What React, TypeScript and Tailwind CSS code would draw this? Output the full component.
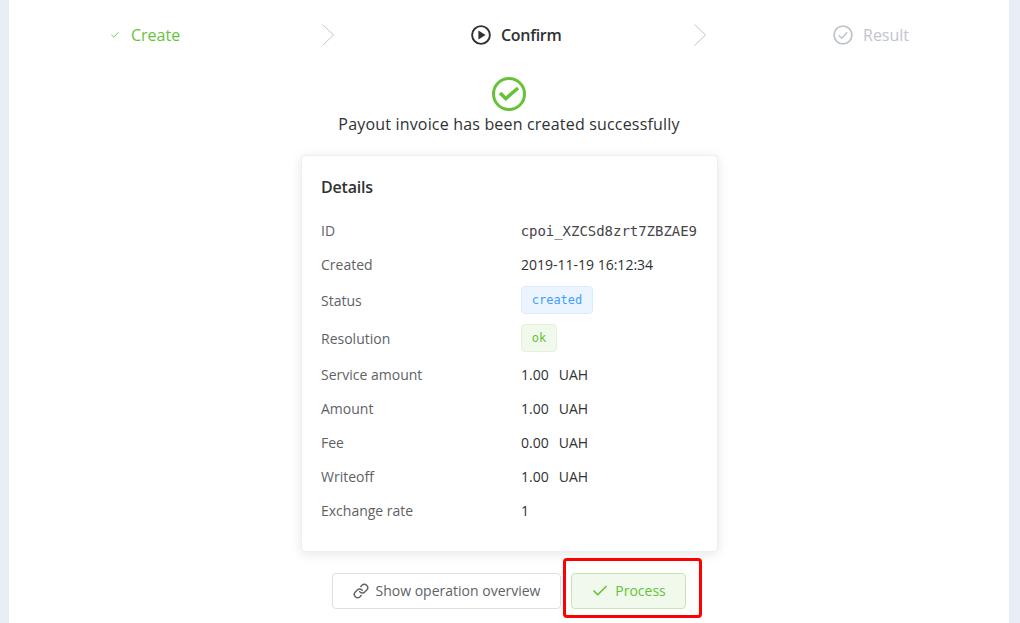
import { Check, Link as LinkIcon } from 'lucide-react';

const rows = [
  { label: 'Service amount', value: '1.00', unit: 'UAH' },
  { label: 'Amount', value: '1.00', unit: 'UAH' },
  { label: 'Fee', value: '0.00', unit: 'UAH' },
  { label: 'Writeoff', value: '1.00', unit: 'UAH' },
  { label: 'Exchange rate', value: '1', unit: '' },
];

function Row({ label, children, h = 'h-[34px]' }: { label: string; children: React.ReactNode; h?: string }) {
  return (
    <div className={`flex items-center ${h}`}>
      <div className="w-[200px] text-[#606266]">{label}</div>
      <div className="text-[#303133]">{children}</div>
    </div>
  );
}

function Arrow() {
  return (
    <svg width="12" height="22" viewBox="0 0 12 22" fill="none" stroke="#c0c4cc" strokeWidth="1">
      <path d="M0.5 0.5 L11.5 11 L0.5 21.5" />
    </svg>
  );
}

export default function App() {
  return (
    <div className="h-[623px] overflow-hidden bg-[#e9edf6] pl-[9px] font-['Open_Sans',sans-serif] text-sm">
      <main className="relative h-full w-[1000px] bg-white">
        {/* Steps */}
        <div className="flex h-[70px] items-center text-base">
          <div className="ml-[101px] flex w-[212px] items-center text-[#67c23a]">
            <Check size={10} strokeWidth={2} className="mr-[11px]" />
            Create
          </div>
          <Arrow />
          <div className="ml-[137px] flex w-[223px] items-center font-semibold tracking-[-0.3px] text-[#303133]">
            <svg width="20" height="20" viewBox="0 0 20 20" className="mr-[10px]">
              <circle cx="10" cy="10" r="8.9" fill="none" stroke="#303133" strokeWidth="1.9" />
              <path d="M7.4 5.6 L14.6 10 L7.4 14.4 Z" fill="#303133" />
            </svg>
            Confirm
          </div>
          <Arrow />
          <div className="ml-[127px] flex items-center text-[#c0c4cc]">
            <svg width="20" height="20" viewBox="0 0 20 20" fill="none" stroke="#c0c4cc" className="mr-[10px]">
              <circle cx="10" cy="10" r="8.9" strokeWidth="1.8" />
              <path d="M5.8 10.2 L8.8 13.2 L14.2 7.2" strokeWidth="1.5" />
            </svg>
            Result
          </div>
        </div>

        {/* Message */}
        <div className="flex flex-col items-center">
          <svg width="36" height="36" viewBox="0 0 36 36" fill="none" className="mt-[6px]">
            <circle cx="18" cy="18" r="15.5" stroke="#67c23a" strokeWidth="3" />
            <path d="M9 17 L14.8 22.5 L27 12" stroke="#67c23a" strokeWidth="3.6" />
          </svg>
          <div className="-mt-[1px] text-base leading-[26px] tracking-[0.18px] text-[#303133]">Payout invoice has been created successfully</div>
        </div>

        {/* Details card */}
        <div className="ml-[292px] mt-[18px] h-[397px] w-[417px] rounded border border-[#ebeef5] pl-[19px] pr-5 pt-[17px] shadow-[0_2px_12px_0_rgba(0,0,0,0.1)]">
          <div className="h-[41px] text-base font-semibold leading-[28px] tracking-[-0.2px] text-[#303133]">Details</div>
          <Row label="ID">
            <span className="ml-[0.5px] font-['DejaVu_Sans_Mono',monospace] text-[14px] tracking-[-0.03px] text-[#45464a]">cpoi_XZCSd8zrt7ZBZAE9</span>
          </Row>
          <Row label="Created">2019-11-19 16:12:34</Row>
          <Row label="Status" h="h-[38px]">
            <span className="mb-[2px] flex h-7 w-[72px] items-center justify-center rounded border border-[#d9ecff] bg-[#ecf5ff] font-['DejaVu_Sans_Mono',monospace] text-xs text-[#409eff]">created</span>
          </Row>
          <Row label="Resolution" h="h-[38px]">
            <span className="mb-[2px] flex h-7 w-9 items-center justify-center rounded border border-[#e1f3d8] bg-[#f0f9eb] font-['DejaVu_Sans_Mono',monospace] text-xs text-[#67c23a]">ok</span>
          </Row>
          {rows.map((r) => (
            <Row key={r.label} label={r.label}>
              {r.value}
              {r.unit && <span className="ml-[10px]">{r.unit}</span>}
            </Row>
          ))}
        </div>

        {/* Actions */}
        <div className="ml-[323px] mt-[21px] flex gap-[10px]">
          <button className="flex h-9 w-[229px] items-center justify-center rounded border border-[#dcdfe6] bg-white text-[#606266]">
            <LinkIcon size={16} strokeWidth={2.2} className="mr-[7px]" />
            Show operation overview
          </button>
          <button className="flex h-9 w-[115px] items-center justify-center rounded border border-[#c2e7b0] bg-[#f0f9eb] text-[#67c23a]">
            <Check size={18} strokeWidth={2.2} className="mr-[6px]" />
            Process
          </button>
        </div>

        {/* Annotation frame */}
        <div className="absolute left-[554px] top-[558px] h-[60px] w-[139px] rounded-sm border-[3px] border-[#ff0000]" />
      </main>
    </div>
  );
}
